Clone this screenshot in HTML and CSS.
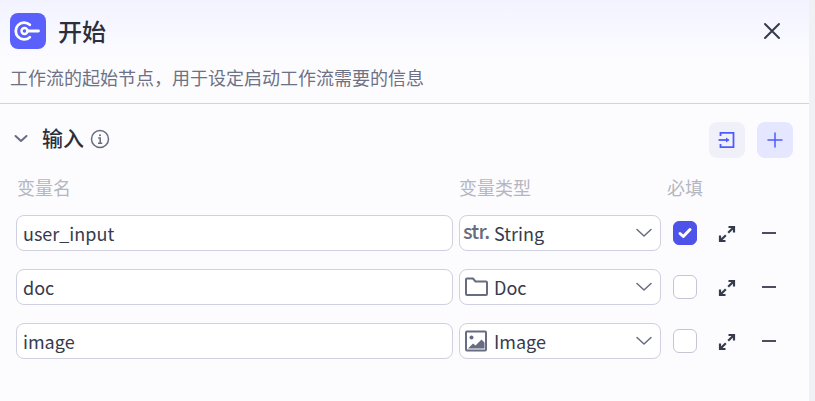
FILE: index.html
```html
<!DOCTYPE html>
<html lang="zh-CN">
<head>
  <meta charset="UTF-8" />
  <title>开始</title>
  <link rel="stylesheet" href="styles.css">
</head>
<body>
  <div class="panel">
    <header class="panel-head">
      <div class="title-row">
        <div class="node-icon">
          <svg width="36" height="36" viewBox="0 0 36 36" fill="none" stroke="#fff" stroke-width="2.8" stroke-linecap="round">
            <path d="M19.800 11.800a8.400 8.400 0 1 0 0 12.400"/>
            <circle cx="14.500" cy="18" r="3" stroke-width="2.400"/>
            <path d="M17.500 18h11"/>
          </svg>
        </div>
        <h1 class="title">开始</h1>
        <svg class="close" width="18" height="18" viewBox="0 0 18 18" fill="none" stroke="#363b4c" stroke-width="2" stroke-linecap="round">
          <path d="M2 2l14 14M16 2L2 16"/>
        </svg>
      </div>
      <p class="desc">工作流的起始节点，用于设定启动工作流需要的信息</p>
    </header>

    <section class="inputs">
      <div class="section-head">
        <svg class="chevron" width="16" height="16" viewBox="0 0 16 16" fill="none" stroke="#676c80" stroke-width="2" stroke-linecap="round" stroke-linejoin="round">
          <path d="M2.500 5L8 10l5.500-5"/>
        </svg>
        <span class="section-title">输入</span>
        <svg class="info" width="20" height="20" viewBox="0 0 20 20" fill="none" stroke="#676c80" stroke-width="1.5">
          <circle cx="10" cy="10" r="8.500"/>
          <path d="M8.200 9h2v5M8 14.200h4.200"/>
          <circle cx="10" cy="6.200" r="1" fill="#676c80" stroke="none"/>
        </svg>
        <div class="head-btns">
          <button class="square-btn grey">
            <svg width="20" height="20" viewBox="0 0 20 20" fill="none" stroke="#4f5bff" stroke-width="1.8">
              <path d="M3.500 6V2.800h13v14.400h-13V14"/>
              <path d="M1.500 10h10"/>
              <path d="M9 7.600l3.500 2.400L9 12.400z" fill="#4f5bff" stroke="none"/>
            </svg>
          </button>
          <button class="square-btn blue">
            <svg width="16" height="16" viewBox="0 0 16 16" fill="none" stroke="#4f5bff" stroke-width="1.500" stroke-linecap="round">
              <path d="M8 1v14M1 8h14"/>
            </svg>
          </button>
        </div>
      </div>

      <div class="grid labels">
        <span>变量名</span>
        <span>变量类型</span>
        <span>必填</span>
      </div>

      <div class="grid row">
        <div class="field">user_input</div>
        <div class="field select">
          <span class="type-str">str.</span>
          <span class="type-name">String</span>
          <svg class="caret" width="18" height="18" viewBox="0 0 18 18" fill="none" stroke="#676c80" stroke-width="1.5" stroke-linecap="round" stroke-linejoin="round"><path d="M2 5.500l7 6.500 7-6.500"/></svg>
        </div>
        <div class="actions">
          <span class="check on">
            <svg width="16" height="16" viewBox="0 0 16 16" fill="none" stroke="#fff" stroke-width="3" stroke-linecap="round" stroke-linejoin="round"><path d="M3 8.500l3.300 3L13 4.500"/></svg>
          </span>
          <svg class="expand" width="18" height="18" viewBox="0 0 18 18" fill="none" stroke="#363b4c" stroke-width="2.200"><path d="M10.500 2h5.500v5.500M16 2l-5.800 5.800"/><path d="M7.500 16H2v-5.500M2 16l5.800-5.800"/></svg>
          <span class="minus"></span>
        </div>
      </div>

      <div class="grid row">
        <div class="field">doc</div>
        <div class="field select">
          <svg class="type-icon" width="24" height="24" viewBox="0 0 24 24" fill="none" stroke="#676c80" stroke-width="2"><path d="M2 4.500a1 1 0 0 1 1-1h6l2.500 3H22a1 1 0 0 1 1 1V19a1 1 0 0 1-1 1H3a1 1 0 0 1-1-1z"/></svg>
          <span class="type-name">Doc</span>
          <svg class="caret" width="18" height="18" viewBox="0 0 18 18" fill="none" stroke="#676c80" stroke-width="1.5" stroke-linecap="round" stroke-linejoin="round"><path d="M2 5.500l7 6.500 7-6.500"/></svg>
        </div>
        <div class="actions">
          <span class="check"></span>
          <svg class="expand" width="18" height="18" viewBox="0 0 18 18" fill="none" stroke="#363b4c" stroke-width="2.200"><path d="M10.500 2h5.500v5.500M16 2l-5.800 5.800"/><path d="M7.500 16H2v-5.500M2 16l5.800-5.800"/></svg>
          <span class="minus"></span>
        </div>
      </div>

      <div class="grid row">
        <div class="field">image</div>
        <div class="field select">
          <svg class="type-icon" width="24" height="24" viewBox="0 0 24 24" fill="none" stroke="#676c80" stroke-width="2">
            <rect x="2" y="2.500" width="20" height="19" rx="1"/>
            <circle cx="7.500" cy="8.500" r="2" fill="#676c80" stroke="none"/>
            <path d="M4 19.500l5-5 2.500 2 6-6 3 3v6z" fill="#676c80" stroke="none"/>
          </svg>
          <span class="type-name">Image</span>
          <svg class="caret" width="18" height="18" viewBox="0 0 18 18" fill="none" stroke="#676c80" stroke-width="1.5" stroke-linecap="round" stroke-linejoin="round"><path d="M2 5.500l7 6.500 7-6.500"/></svg>
        </div>
        <div class="actions">
          <span class="check"></span>
          <svg class="expand" width="18" height="18" viewBox="0 0 18 18" fill="none" stroke="#363b4c" stroke-width="2.200"><path d="M10.500 2h5.500v5.500M16 2l-5.800 5.800"/><path d="M7.500 16H2v-5.500M2 16l5.800-5.800"/></svg>
          <span class="minus"></span>
        </div>
      </div>
    </section>
  </div>
</body>
</html>
```

FILE: styles.css
```css
* {
  margin: 0;
  padding: 0;
  box-sizing: border-box;
}

html, body {
  height: 100%;
  overflow: hidden;
}

body {
  font-family: "Noto Sans CJK SC", "Noto Sans", sans-serif;
  color: #1d2233;
  background: #f0f1f5;
}

.panel {
  width: 809px;
  height: 401px;
  background: #fcfcff;
}

.panel-head {
  height: 104px;
  padding: 13px 10px 0;
  border-bottom: 1px solid #d3d3dd;
  background: linear-gradient(#f2f3ff, #fcfcff 60px);
}

.title-row {
  display: flex;
  align-items: center;
  height: 36px;
}

.node-icon {
  width: 36px;
  height: 36px;
  border-radius: 8px;
  background: #5a60fb;
}

.node-icon svg {
  display: block;
}

.title {
  margin-left: 12px;
  font-size: 24px;
  font-weight: 500;
  line-height: 36px;
  color: #2b2f3d;
}

.close {
  margin-left: auto;
  margin-right: 18px;
}

.desc {
  margin-top: 16px;
  font-size: 18px;
  line-height: 24px;
  color: #6d7185;
}

.inputs {
  padding: 18px 16px 0;
}

.section-head {
  display: flex;
  align-items: center;
  height: 36px;
}

.chevron {
  margin-left: -3px;
  margin-top: -2px;
}

.section-title {
  margin-left: 13px;
  font-size: 21px;
  line-height: 32px;
  margin-top: -6px;
  font-weight: 500;
  color: #2b2f3d;
}

.info {
  margin-left: 6px;
  margin-top: -2px;
}

.head-btns {
  display: flex;
  gap: 12px;
  margin-left: auto;
}

.square-btn {
  width: 36px;
  height: 36px;
  border: none;
  border-radius: 8px;
  display: flex;
  align-items: center;
  justify-content: center;
}

.square-btn.grey {
  background: #f0f0f9;
}

.square-btn.blue {
  background: #e5e6ff;
}

.grid {
  display: grid;
  grid-template-columns: 437px 202px 1fr;
  column-gap: 6px;
}

.labels {
  margin-top: 17px;
  font-size: 18px;
  line-height: 24px;
  color: #b4b6c0;
}

.labels span:first-child {
  padding-left: 1px;
}

.row {
  margin-top: 18px;
  height: 36px;
}

.labels + .row {
  margin-top: 16px;
}

.field {
  height: 36px;
  border: 1px solid #cfd0e0;
  border-radius: 8px;
  background: #fff;
  padding-left: 6px;
  font-size: 18px;
  line-height: 36px;
  color: #363b4c;
  display: flex;
  align-items: center;
}

.select {
  padding-left: 4px;
  padding-right: 7px;
}

.type-str {
  width: 31px;
  margin-left: -1px;
  font-size: 20px;
  font-weight: 500;
  letter-spacing: -0.8px;
  line-height: 30px;
  color: #676c80;
  margin-top: -4px;
}

.type-icon {
  width: 24px;
  flex-shrink: 0;
  margin-right: 6px;
}

.type-name {
  font-size: 18px;
}

.caret {
  margin-left: auto;
}

.actions {
  display: flex;
  align-items: center;
}

.check {
  width: 24px;
  height: 24px;
  margin-left: 6px;
  border: 1px solid #c4c6d6;
  border-radius: 6px;
  background: #fff;
  display: flex;
  align-items: center;
  justify-content: center;
}

.check.on {
  background: #4d53e8;
  border-color: #4d53e8;
}

.expand {
  margin-left: 21px;
  margin-top: 2px;
}

.minus {
  width: 14px;
  height: 1.5px;
  margin-left: 26px;
  background: #4a4e5e;
}
```
